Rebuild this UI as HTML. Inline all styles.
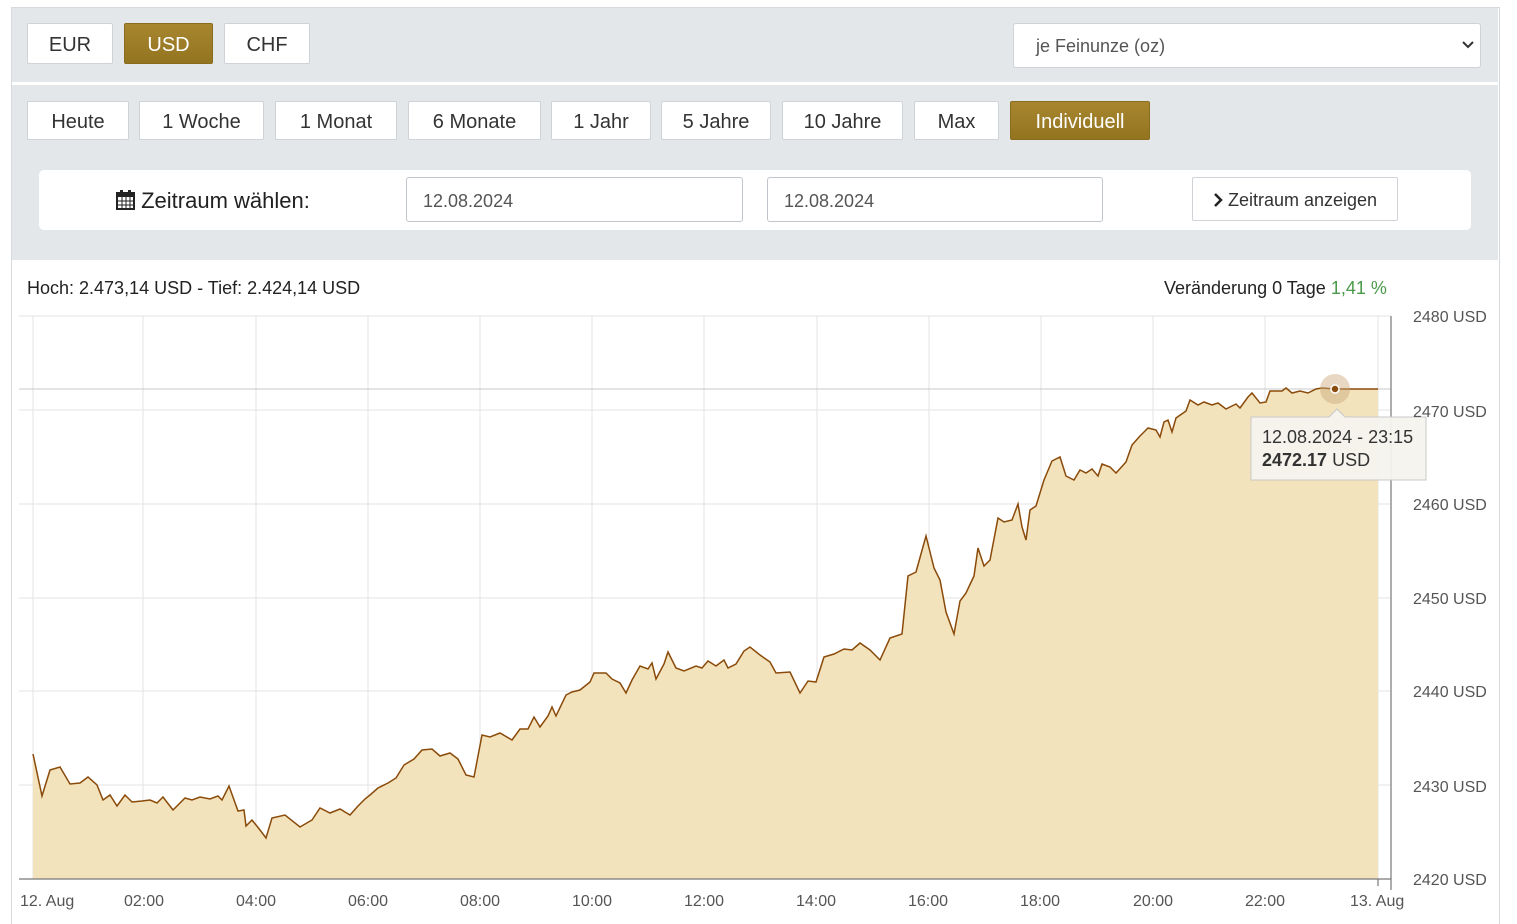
<!DOCTYPE html><html style="overflow:hidden;height:924px"><head><style>
body{margin:0;width:1517px;height:924px;background:#fff;font-family:"Liberation Sans",sans-serif;position:relative;overflow:hidden}
.wrap{position:absolute;left:11px;top:7px;width:1487px;height:917px;border:1px solid #d6dade;border-bottom:none}
.gray{position:absolute;left:12px;top:8px;width:1486px;height:252px;background:#e4e7ea}
.b{position:absolute;background:#fff;border:1px solid #cfd3d7;border-radius:2px;font-size:20px;color:#333;text-align:center;box-sizing:border-box}
.on{background:linear-gradient(#a88630,#93741f);color:#fff;border-color:#8a6c1e}
.sel{position:absolute;left:1013px;top:23px;width:468px;height:45px;background:#fff;border:1px solid #cfd3d7;border-radius:3px;box-sizing:border-box;font-size:18px;color:#555;line-height:45px;padding-left:22px}
.inp{position:absolute;top:177px;height:45px;width:337px;border:1px solid #bfc5ca;border-radius:3px;box-sizing:border-box;font-size:18px;color:#555;line-height:46px;padding-left:16px;background:#fff}
.ax{position:absolute;font-size:16px;color:#555}
</style></head><body>
<div class="wrap"></div>
<div class="gray"></div>
<div class="b" style="left:27px;top:23px;width:86px;height:41px;line-height:43px">EUR</div>
<div class="b on" style="left:124px;top:23px;width:89px;height:41px;line-height:43px">USD</div>
<div class="b" style="left:224px;top:23px;width:86px;height:41px;line-height:43px">CHF</div>
<div class="sel">je Feinunze (oz)<svg style="position:absolute;right:6px;top:17px" width="12" height="8" viewBox="0 0 12 8"><path d="M1 1l5 5 5-5" fill="none" stroke="#333" stroke-width="2"/></svg></div>
<div style="position:absolute;left:12px;top:82px;width:1486px;height:3px;background:#fff"></div>
<div class="b" style="left:27px;top:101px;width:102px;height:39px;line-height:41px">Heute</div>
<div class="b" style="left:139px;top:101px;width:125px;height:39px;line-height:41px">1 Woche</div>
<div class="b" style="left:275px;top:101px;width:122px;height:39px;line-height:41px">1 Monat</div>
<div class="b" style="left:408px;top:101px;width:133px;height:39px;line-height:41px">6 Monate</div>
<div class="b" style="left:551px;top:101px;width:100px;height:39px;line-height:41px">1 Jahr</div>
<div class="b" style="left:661px;top:101px;width:110px;height:39px;line-height:41px">5 Jahre</div>
<div class="b" style="left:782px;top:101px;width:121px;height:39px;line-height:41px">10 Jahre</div>
<div class="b" style="left:914px;top:101px;width:85px;height:39px;line-height:41px">Max</div>
<div class="b on" style="left:1010px;top:101px;width:140px;height:39px;line-height:41px">Individuell</div>
<div style="position:absolute;left:39px;top:170px;width:1432px;height:60px;background:#fff;border-radius:5px"></div>
<div style="position:absolute;left:116px;top:188px;font-size:22px;color:#222"><svg width="19" height="21" viewBox="0 0 19 21" style="vertical-align:-2px"><rect x="1" y="4" width="17" height="16" fill="none" stroke="#222" stroke-width="2"/><rect x="1" y="4" width="17" height="4" fill="#222"/><rect x="4" y="1" width="3" height="5" fill="#222"/><rect x="12" y="1" width="3" height="5" fill="#222"/><path d="M1 12h17M1 16h17M6 8v12M10 8v12M14 8v12" stroke="#222" stroke-width="1"/></svg> Zeitraum wählen:</div>
<div class="inp" style="left:406px">12.08.2024</div>
<div class="inp" style="left:767px;width:336px">12.08.2024</div>
<div class="b" style="left:1192px;top:177px;width:206px;height:44px;line-height:44px;font-size:18px"><svg width="10" height="14" viewBox="0 0 10 14" style="vertical-align:-1px"><path d="M2 1l6 6-6 6" fill="none" stroke="#222" stroke-width="2.5"/></svg> Zeitraum anzeigen</div>
<div style="position:absolute;left:27px;top:278px;font-size:18px;color:#222">Hoch: 2.473,14 USD - Tief: 2.424,14 USD</div>
<div style="position:absolute;left:1164px;top:278px;font-size:18px;color:#222">Veränderung 0 Tage <span style="color:#4a9a4a">1,41 %</span></div>
<svg style="position:absolute;left:0;top:0" width="1517" height="924">
<g stroke="#e3e3e3" stroke-width="1">
<path d="M19 316H1391M19 410H1391M19 504H1391M19 598H1391M19 691H1391M19 785H1391"/>
<path d="M33 316V879M143 316V879M256 316V879M368 316V879M480 316V879M592 316V879M704 316V879M817 316V879M929 316V879M1041 316V879M1153 316V879M1265 316V879M1378 316V879"/>
</g>
<path d="M19 389H1391" stroke="#c8c8c8"/>
<path fill="#f3e3bc" stroke="none" d="M33 879L33 754L42 796L50 770L60 767L70 784L80 783L88 777L97 785L103 800L110 795L117 806L125 795L132 802L142 801L150 800L157 803L163 797L173 810L185 798L192 800L200 797L210 799L218 796L222 800L229 786L238 811L244 810L246 826L252 820L260 830L266 838L272 818L285 815L300 827L312 820L320 808L330 813L340 809L350 815L358 806L365 799L370 795L378 788L388 783L396 778L404 765L414 759L422 750L432 749L440 756L450 753L458 759L466 775L474 777L482 735L490 737L500 733L512 740L520 729L528 729L534 717L540 727L548 716L552 707L556 716L566 695L572 692L580 690L590 682L594 673L606 673L612 679L620 683L626 693L632 680L640 666L648 669L652 663L656 679L664 664L668 652L676 668L684 671L696 666L702 668L708 661L716 666L724 660L728 668L736 664L744 651L750 647L760 655L770 662L776 673L790 672L800 693L808 681L816 682L824 657L834 654L844 649L852 650L860 643L870 650L880 660L890 638L902 634L908 576L916 572L926 536L934 568L940 580L946 612L954 634L960 601L966 593L974 576L978 548L984 566L990 560L998 518L1004 522L1012 520L1018 504L1022 527L1026 540L1030 510L1036 506L1044 480L1052 461L1060 457L1066 476L1074 480L1080 470L1086 473L1092 469L1098 476L1102 464L1110 467L1116 473L1126 462L1132 445L1140 436L1148 428L1156 430L1160 437L1164 422L1168 420L1172 432L1176 418L1186 411L1190 400L1198 405L1204 402L1212 405L1218 403L1226 409L1236 404L1240 408L1248 397L1252 393L1260 403L1266 402L1270 391L1282 391L1286 388L1292 393L1300 391L1308 393L1316 389L1322 388L1335 389L1378 389L1378 879Z"/>
<path fill="none" stroke="#8a4a0a" stroke-width="1.5" d="M33 754L42 796L50 770L60 767L70 784L80 783L88 777L97 785L103 800L110 795L117 806L125 795L132 802L142 801L150 800L157 803L163 797L173 810L185 798L192 800L200 797L210 799L218 796L222 800L229 786L238 811L244 810L246 826L252 820L260 830L266 838L272 818L285 815L300 827L312 820L320 808L330 813L340 809L350 815L358 806L365 799L370 795L378 788L388 783L396 778L404 765L414 759L422 750L432 749L440 756L450 753L458 759L466 775L474 777L482 735L490 737L500 733L512 740L520 729L528 729L534 717L540 727L548 716L552 707L556 716L566 695L572 692L580 690L590 682L594 673L606 673L612 679L620 683L626 693L632 680L640 666L648 669L652 663L656 679L664 664L668 652L676 668L684 671L696 666L702 668L708 661L716 666L724 660L728 668L736 664L744 651L750 647L760 655L770 662L776 673L790 672L800 693L808 681L816 682L824 657L834 654L844 649L852 650L860 643L870 650L880 660L890 638L902 634L908 576L916 572L926 536L934 568L940 580L946 612L954 634L960 601L966 593L974 576L978 548L984 566L990 560L998 518L1004 522L1012 520L1018 504L1022 527L1026 540L1030 510L1036 506L1044 480L1052 461L1060 457L1066 476L1074 480L1080 470L1086 473L1092 469L1098 476L1102 464L1110 467L1116 473L1126 462L1132 445L1140 436L1148 428L1156 430L1160 437L1164 422L1168 420L1172 432L1176 418L1186 411L1190 400L1198 405L1204 402L1212 405L1218 403L1226 409L1236 404L1240 408L1248 397L1252 393L1260 403L1266 402L1270 391L1282 391L1286 388L1292 393L1300 391L1308 393L1316 389L1322 388L1335 389L1378 389"/>
<path d="M19 879H1391M1391 316V890M1378 879V886" stroke="#777" stroke-width="1.2"/>
<circle cx="1335" cy="389" r="15" fill="#c9a77a" opacity=".45"/>
<circle cx="1335" cy="389" r="4" fill="#8a4a0a" stroke="#fff" stroke-width="1.5"/>
<path d="M1251 417H1329L1337 409L1345 417H1426V480H1251Z" fill="#f6f3ee" fill-opacity=".95" stroke="#c8c8c8"/>
</svg>
<div style="position:absolute;left:1262px;top:426px;font-size:18px;color:#333;line-height:23px">12.08.2024 - 23:15<br><b>2472.17</b> USD</div>
<div class="ax" style="left:1413px;top:309px">2480 USD</div>
<div class="ax" style="left:1413px;top:404px">2470 USD</div>
<div class="ax" style="left:1413px;top:497px">2460 USD</div>
<div class="ax" style="left:1413px;top:591px">2450 USD</div>
<div class="ax" style="left:1413px;top:684px">2440 USD</div>
<div class="ax" style="left:1413px;top:779px">2430 USD</div>
<div class="ax" style="left:1413px;top:872px">2420 USD</div>
<div class="ax" style="left:20px;top:893px">12. Aug</div>
<div class="ax" style="left:124px;top:893px">02:00</div>
<div class="ax" style="left:236px;top:893px">04:00</div>
<div class="ax" style="left:348px;top:893px">06:00</div>
<div class="ax" style="left:460px;top:893px">08:00</div>
<div class="ax" style="left:572px;top:893px">10:00</div>
<div class="ax" style="left:684px;top:893px">12:00</div>
<div class="ax" style="left:796px;top:893px">14:00</div>
<div class="ax" style="left:908px;top:893px">16:00</div>
<div class="ax" style="left:1020px;top:893px">18:00</div>
<div class="ax" style="left:1133px;top:893px">20:00</div>
<div class="ax" style="left:1245px;top:893px">22:00</div>
<div class="ax" style="left:1350px;top:893px">13. Aug</div>
</body></html>
